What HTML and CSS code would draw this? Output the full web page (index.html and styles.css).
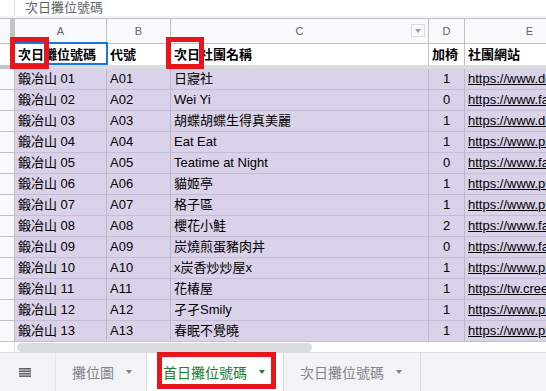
FILE: index.html
```html
<!DOCTYPE html>
<html lang="zh-Hant">
<head>
<meta charset="utf-8">
<title>次日攤位號碼</title>
<link rel="stylesheet" href="styles.css">
</head>
<body>
<div class="app">
  <div class="formula">
    <div class="fx-cell"></div>
    <div class="fx-text">次日攤位號碼</div>
  </div>
  <div class="band"></div>

  <div class="sheet">
    <div class="row colhead">
      <div class="c rh corner"></div>
      <div class="c">A</div>
      <div class="c">B</div>
      <div class="c cc">C<span class="filter"><span class="tri tri-filter"></span></span></div>
      <div class="c">D</div>
      <div class="c">E</div>
    </div>

    <div class="row hdr">
      <div class="c rh"></div>
      <div class="c">次日攤位號碼</div>
      <div class="c">代號</div>
      <div class="c">次日社團名稱</div>
      <div class="c">加椅</div>
      <div class="c">社團網站</div>
    </div>

    <div class="freeze"><div class="fz-rh"></div><div class="fz"></div></div>

    <div class="row data"><div class="c rh"></div><div class="c">鍛冶山 01</div><div class="c">A01</div><div class="c">日寢社</div><div class="c num">1</div><div class="c link">https://www.dcard.tw/</div></div>
    <div class="row data"><div class="c rh"></div><div class="c">鍛冶山 02</div><div class="c">A02</div><div class="c">Wei Yi</div><div class="c num">0</div><div class="c link">https://www.facebook.com/</div></div>
    <div class="row data"><div class="c rh"></div><div class="c">鍛冶山 03</div><div class="c">A03</div><div class="c">胡蝶胡蝶生得真美麗</div><div class="c num">1</div><div class="c link">https://www.dcard.tw/</div></div>
    <div class="row data"><div class="c rh"></div><div class="c">鍛冶山 04</div><div class="c">A04</div><div class="c">Eat Eat</div><div class="c num">1</div><div class="c link">https://www.plurk.com/</div></div>
    <div class="row data"><div class="c rh"></div><div class="c">鍛冶山 05</div><div class="c">A05</div><div class="c">Teatime at Night</div><div class="c num">0</div><div class="c link">https://www.facebook.com/</div></div>
    <div class="row data"><div class="c rh"></div><div class="c">鍛冶山 06</div><div class="c">A06</div><div class="c">貓姬亭</div><div class="c num">1</div><div class="c link">https://www.plurk.com/</div></div>
    <div class="row data"><div class="c rh"></div><div class="c">鍛冶山 07</div><div class="c">A07</div><div class="c">格子區</div><div class="c num">1</div><div class="c link">https://www.plurk.com/</div></div>
    <div class="row data"><div class="c rh"></div><div class="c">鍛冶山 08</div><div class="c">A08</div><div class="c">櫻花小鮭</div><div class="c num">2</div><div class="c link">https://www.facebook.com/</div></div>
    <div class="row data"><div class="c rh"></div><div class="c">鍛冶山 09</div><div class="c">A09</div><div class="c">炭燒煎蛋豬肉丼</div><div class="c num">0</div><div class="c link">https://www.facebook.com/</div></div>
    <div class="row data"><div class="c rh"></div><div class="c">鍛冶山 10</div><div class="c">A10</div><div class="c">x炭香炒炒屋x</div><div class="c num">1</div><div class="c link">https://www.plurk.com/</div></div>
    <div class="row data"><div class="c rh"></div><div class="c">鍛冶山 11</div><div class="c">A11</div><div class="c">花椿屋</div><div class="c num">1</div><div class="c link">https://tw.creema.jp/</div></div>
    <div class="row data"><div class="c rh"></div><div class="c">鍛冶山 12</div><div class="c">A12</div><div class="c">孑孑Smily</div><div class="c num">1</div><div class="c link">https://www.plurk.com/</div></div>
    <div class="row data"><div class="c rh"></div><div class="c">鍛冶山 13</div><div class="c">A13</div><div class="c">春眠不覺曉</div><div class="c num">1</div><div class="c link">https://www.plurk.com/</div></div>
  </div>

  <div class="scroll">
    <div class="sc-rh"></div>
    <div class="thumb"></div>
  </div>

  <div class="tabs">
    <div class="menu">
      <svg width="12" height="9" viewBox="0 0 12 9"><rect x="0" y="0" width="12" height="1.6" fill="#5f6368"/><rect x="0" y="2.45" width="12" height="1.6" fill="#5f6368"/><rect x="0" y="4.9" width="12" height="1.6" fill="#5f6368"/><rect x="0" y="7.35" width="12" height="1.6" fill="#5f6368"/></svg>
    </div>
    <div class="tab tab1">攤位圖<span class="tri tri-tab"></span></div>
    <div class="tab tab2 active">首日攤位號碼<span class="tri tri-active"></span></div>
    <div class="tab tab3">次日攤位號碼<span class="tri tri-tab"></span></div>
  </div>

  <div class="selection"></div>
  <div class="mark mark1"></div>
  <div class="mark mark2"></div>
  <div class="mark mark3"></div>
</div>
</body>
</html>
```

FILE: styles.css
```css
* { box-sizing: border-box; }

html, body {
  margin: 0;
  padding: 0;
  background: #ffffff;
}

.app {
  position: relative;
  width: 546px;
  height: 391px;
  overflow: hidden;
  font-family: "Liberation Sans", Arial, "Noto Sans CJK TC", sans-serif;
  color: #000;
}

/* formula bar */
.formula {
  display: flex;
  height: 16px;
  background: #fff;
}
.fx-cell {
  width: 15px;
  border-right: 1px solid #dadce0;
}
.fx-text {
  padding-left: 10px;
  font-size: 13px;
  line-height: 15px;
  color: #5f6368;
  white-space: nowrap;
}
.band {
  height: 2px;
  background: #f1f3f4;
}

/* grid */
.sheet {
  width: 595px;
}
.row {
  display: grid;
  grid-template-columns: 15px 92px 64px 258px 36px 130px;
}
.c {
  border-right: 1px solid #c0c0c0;
  border-bottom: 1px solid #c0c0c0;
  padding: 0 3px;
  font-size: 13px;
  line-height: 20px;
  white-space: nowrap;
  overflow: hidden;
}

.colhead {
  height: 26px;
  border-top: 1px solid #c0c0c0;
  background: #f8f9fa;
}
.colhead .c {
  height: 25px;
  font-size: 11px;
  line-height: 24px;
  color: #5f6368;
  text-align: center;
}
.colhead .corner {
  background: linear-gradient(to right, #f8f9fa 0, #f8f9fa 10px, #c4c4c4 10px);
  border-right: none;
}
.cc { position: relative; }
.filter {
  position: absolute;
  right: 3px;
  top: 5px;
  width: 14px;
  height: 13px;
  border: 1px solid #dadce0;
  background: #f8f9fa;
  display: flex;
  align-items: center;
  justify-content: center;
}

.hdr {
  height: 21px;
  background: #fff;
}
.hdr .c {
  height: 21px;
  font-weight: bold;
  line-height: 21px;
  border-bottom: none;
  border-right-color: #c0c0c0;
}
.hdr .rh { background: #fff; }

.freeze {
  display: flex;
  height: 4px;
}
.fz-rh { width: 15px; background: #c4c4c4; }
.fz { flex: 1; background: #dadce0; }

.data { height: 21px; background: #d9d2e9; }
.data .c {
  height: 21px;
  border-right-color: #bdb8ca;
  border-bottom-color: #c3bdd5;
}
.data .rh {
  background: #f8f9fa;
  border-right-color: #c0c0c0;
  border-bottom-color: #c0c0c0;
}
.num { text-align: center; }
.link { text-decoration: underline; }

/* horizontal scrollbar */
.scroll {
  display: flex;
  height: 10px;
  background: #fff;
}
.sc-rh { width: 15px; border-right: 1px solid #dadce0; }
.thumb {
  width: 295px;
  height: 9px;
  margin: 1px 0 0 2px;
  border-radius: 5px;
  background: #dadce0;
}

/* sheet tabs */
.tabs {
  display: flex;
  height: 39px;
  border-top: 1px solid #dadce0;
  background: #f1f3f4;
}
.menu {
  width: 56px;
  padding-left: 19px;
  display: flex;
  align-items: center;
  border-right: 1px solid #e3e5e8;
}
.menu svg { display: block; }
.tab {
  display: flex;
  align-items: center;
  padding-left: 16px;
  font-size: 14px;
  color: #80868b;
  border-right: 1px solid #dadce0;
  white-space: nowrap;
}
.tab1 { width: 91px; }
.tab2 { width: 136px; }
.tab3 { width: 138px; border-left: 1px solid #d5d7da; padding-left: 16px; }
.active {
  background: #fff;
  color: #188038;
  border-right: none;
}

.tri {
  display: inline-block;
  width: 0;
  height: 0;
  border-left: 3.5px solid transparent;
  border-right: 3.5px solid transparent;
  border-top: 4px solid #80868b;
  margin-left: 12px;
}
.tri-active { border-top-color: #188038; }
.tri-filter { margin-left: 0; border-top-color: #9aa0a6; }

/* overlays */
.selection {
  position: absolute;
  left: 13px;
  top: 42px;
  width: 95px;
  height: 23px;
  border: 2px solid #1a73e8;
}
.mark {
  position: absolute;
  border: 5px solid #e8151d;
}
.mark1 { left: 10px; top: 37px; width: 39px; height: 32px; }
.mark2 { left: 166px; top: 37px; width: 38px; height: 32px; }
.mark3 { left: 157px; top: 352px; width: 119px; height: 37px; }
```
